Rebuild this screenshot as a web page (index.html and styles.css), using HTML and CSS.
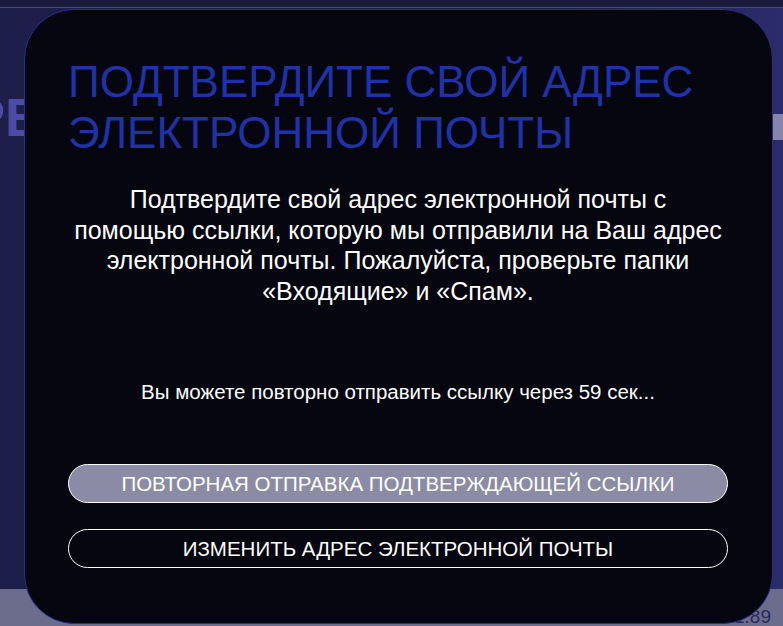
FILE: index.html
```html
<!DOCTYPE html>
<html lang="ru">
<head>
<meta charset="utf-8">
<title>Подтвердите адрес</title>
<link rel="stylesheet" href="styles.css">
</head>
<body>
<div class="page">
  <div class="topbar"></div>
  <div class="page-main">
    <div class="page-row">
      <div class="page-heading">РЕ</div>
      <div class="page-side"><span class="side-btn"></span></div>
    </div>
  </div>
  <div class="page-footer"><span class="version">1.89</span></div>
</div>

<div class="modal">
  <h1 class="modal-title">ПОДТВЕРДИТЕ СВОЙ АДРЕС ЭЛЕКТРОННОЙ ПОЧТЫ</h1>
  <p class="modal-text">Подтвердите свой адрес электронной почты с<br>помощью ссылки, которую мы отправили на Ваш адрес<br>электронной почты. Пожалуйста, проверьте папки<br>«Входящие» и «Спам».</p>
  <p class="modal-timer">Вы можете повторно отправить ссылку через 59 сек...</p>
  <button class="btn btn-filled">ПОВТОРНАЯ ОТПРАВКА ПОДТВЕРЖДАЮЩЕЙ ССЫЛКИ</button>
  <button class="btn btn-outline">ИЗМЕНИТЬ АДРЕС ЭЛЕКТРОННОЙ ПОЧТЫ</button>
</div>
</body>
</html>
```

FILE: styles.css
```css
* { box-sizing: border-box; }
html, body {
  margin: 0;
  padding: 0;
  width: 783px;
  height: 626px;
  overflow: hidden;
  font-family: "Liberation Sans", Arial, sans-serif;
  background: #1c1c46;
}
.page {
  display: flex;
  flex-direction: column;
  height: 626px;
}
.topbar {
  height: 8px;
  background: #1b1b3e;
  border-bottom: 1px solid #4a4a78;
}
.page-main {
  flex: 1;
  background: linear-gradient(90deg, #1e1e4a 0%, #1c1c46 70%, #2c2c6c 100%);
}
.page-row {
  display: flex;
  justify-content: space-between;
  padding-top: 82px;
}
.page-heading {
  margin-left: -31px;
  font-size: 54px;
  font-weight: bold;
  color: #4c4ca6;
  line-height: 54px;
  white-space: nowrap;
}
.page-side {
  padding-top: 24px;
}
.side-btn {
  display: block;
  width: 12px;
  height: 26px;
  background: #8686aa;
  border-radius: 3px 0 0 3px;
}
.page-footer {
  height: 37px;
  background: #6c6c8c;
  display: flex;
  justify-content: flex-end;
  align-items: flex-end;
  padding: 0 12px 0 0;
}
.version {
  font-size: 19px;
  color: #2a2a5c;
  line-height: 22px;
  margin-bottom: -2px;
}

.modal {
  position: absolute;
  left: 24px;
  top: 9px;
  width: 749px;
  height: 615px;
  background: #05060f;
  border: 1px solid #2a2f8e;
  border-radius: 50px;
  padding: 46px 44px 0 43px;
  display: flex;
  flex-direction: column;
}
.modal-title {
  margin: 0;
  font-size: 44px;
  line-height: 51px;
  font-weight: normal;
  color: #1f32a8;
  letter-spacing: 0;
}
.modal-text {
  margin: 26px -10px 0;
  text-align: center;
  color: #ffffff;
  font-size: 25px;
  line-height: 30.5px;
  white-space: nowrap;
}
.modal-timer {
  margin: 74px 0 0;
  text-align: center;
  color: #ffffff;
  font-size: 20.5px;
  line-height: 24px;
}
.btn {
  font-family: "Liberation Sans", Arial, sans-serif;
  width: 660px;
  height: 39px;
  border: 1px solid #ffffff;
  border-radius: 20px;
  color: #ffffff;
  font-size: 20.5px;
  padding: 0;
  text-align: center;
}
.btn-filled {
  margin-top: 60px;
  background: #8b8ba6;
}
.btn-outline {
  margin-top: 26px;
  background: transparent;
}
```
